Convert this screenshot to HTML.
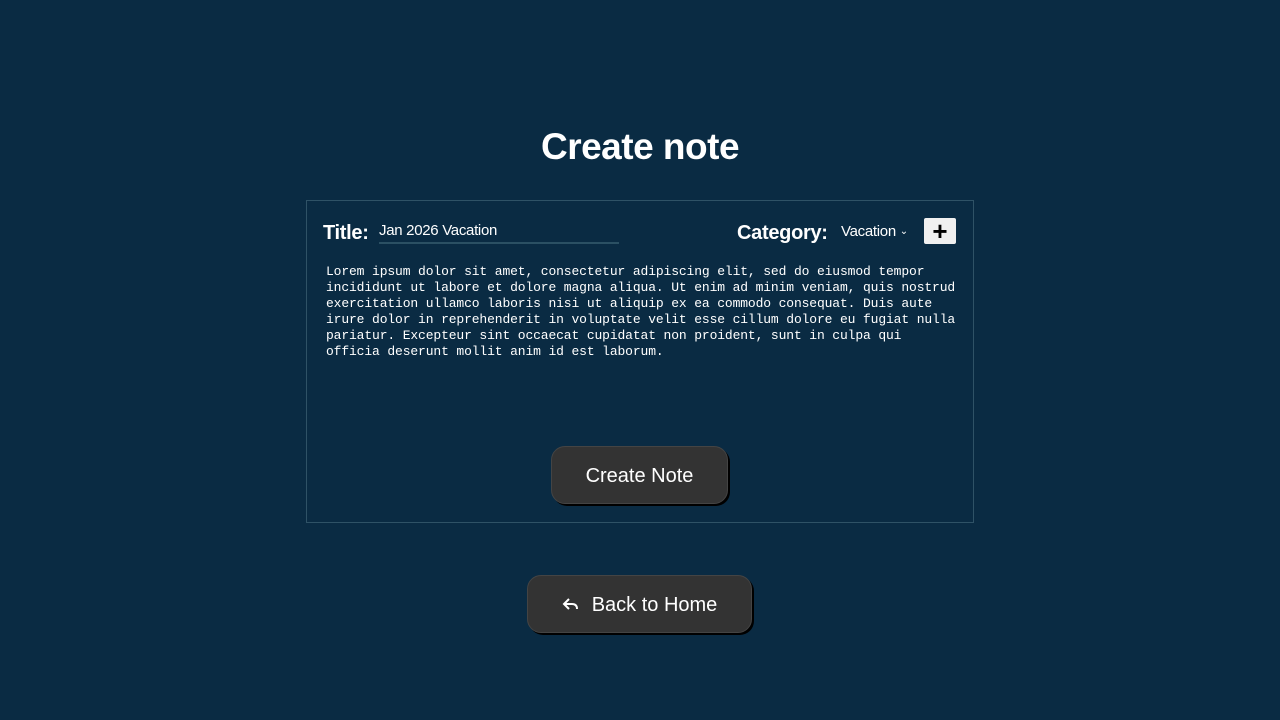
<!DOCTYPE html>
<html><head><style>
body{margin:0;width:1280px;height:720px;background:#0a2b43;font-family:"Liberation Sans",sans-serif;color:#fff;position:relative;overflow:hidden}
h1{position:absolute;top:124px;left:0;width:1280px;text-align:center;margin:0;font-size:37px;font-weight:bold;line-height:46px;letter-spacing:-0.5px}
.box{position:absolute;left:306px;top:200px;width:666px;height:321px;border:1px solid #2f5266}
.lbl{position:absolute;font-weight:bold;font-size:20px;letter-spacing:-0.3px}
.title-in{position:absolute;left:379px;top:222px;width:240px;height:20px;border-bottom:2px solid #2b5063;font-size:15px;letter-spacing:-0.3px}
.plus{position:absolute;left:924px;top:218px;width:32px;height:26px;background:#f0f0f0;border-radius:2px;color:#000;font-size:26px;font-weight:bold;text-align:center;line-height:26px}
pre{position:absolute;left:326px;top:264px;margin:0;font-family:"Liberation Mono",monospace;font-size:13px;line-height:16px;color:#fff;letter-spacing:-0.13px}
.btn{position:absolute;background:#333;border-radius:14px;box-shadow:2px 2px 0 #000;border:1px solid #444;font-size:20px;text-align:center;box-sizing:border-box}
</style></head><body>
<h1>Create note</h1>
<div class="box"></div>
<div class="lbl" style="left:323px;top:222px">Title:</div>
<div class="title-in">Jan 2026 Vacation</div>
<div class="lbl" style="left:737px;top:222px">Category:</div>
<div style="position:absolute;left:841px;top:223px;font-size:15px;letter-spacing:-0.3px">Vacation <span style="font-size:10px;position:relative;top:-2px">&#8964;</span></div>
<div class="plus">+</div>
<pre>Lorem ipsum dolor sit amet, consectetur adipiscing elit, sed do eiusmod tempor
incididunt ut labore et dolore magna aliqua. Ut enim ad minim veniam, quis nostrud
exercitation ullamco laboris nisi ut aliquip ex ea commodo consequat. Duis aute
irure dolor in reprehenderit in voluptate velit esse cillum dolore eu fugiat nulla
pariatur. Excepteur sint occaecat cupidatat non proident, sunt in culpa qui
officia deserunt mollit anim id est laborum.</pre>
<div class="btn" style="left:551px;top:446px;width:177px;height:58px;line-height:58px">Create Note</div>
<div class="btn" style="left:527px;top:575px;width:225px;height:58px;line-height:58px"><svg width="18" height="16" viewBox="0 0 18 16" style="vertical-align:-1px;margin-right:12px"><path d="M7 3 L2 8 L7 13 M2 8 H10 Q15 8 15 13" fill="none" stroke="#fff" stroke-width="2"/></svg>Back to Home</div>
</body></html>
